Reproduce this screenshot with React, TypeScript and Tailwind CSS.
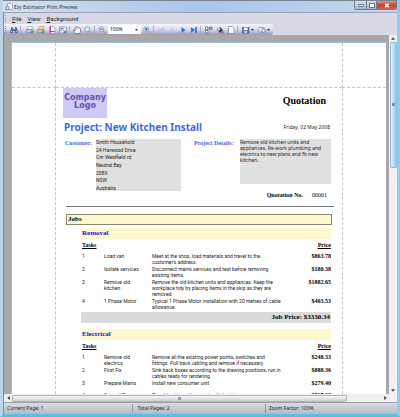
import type { ReactNode } from "react";

type Task = { name: string[]; description: string[]; price: string };

const customer = [
  "Smith Household",
  "24 Harwood Drive",
  "Cnr Westfield rd",
  "Neutral Bay",
  "2089",
  "NSW",
  "Australia",
];

const removalTasks: Task[] = [
  {
    name: ["Load van"],
    description: ["Meet at the shop, load materials and travel to the", "customer's address."],
    price: "$863.78",
  },
  {
    name: ["Isolate services"],
    description: ["Disconnect mains services and test before removing", "existing items."],
    price: "$180.38",
  },
  {
    name: ["Remove old", "kitchen"],
    description: [
      "Remove the old kitchen units and appliances. Keep the",
      "workplace tidy by placing items in the skip as they are",
      "removed.",
    ],
    price: "$1882.65",
  },
  {
    name: ["1 Phase Motor"],
    description: ["Typical 1 Phase Motor installation with 20 metres of cable", "allowance."],
    price: "$403.53",
  },
];

const electricalTasks: Task[] = [
  {
    name: ["Remove old", "electrics"],
    description: ["Remove all the existing power points, switches and", "fittings. Pull back cabling and remove if necessary."],
    price: "$248.33",
  },
  {
    name: ["First Fix"],
    description: ["Sink back boxes according to the drawing positions, run in", "cables ready for rendering."],
    price: "$888.36",
  },
  {
    name: ["Prepare Mains"],
    description: ["Install new consumer unit"],
    price: "$279.40",
  },
  {
    name: ["Second Fix"],
    description: ["Travel to site and terminate all electrics"],
    price: "$867.62",
  },
];

function Lines({ lines }: { lines: string[] }) {
  return (
    <>
      {lines.map((line) => (
        <span key={line} className="block whitespace-nowrap">
          {line}
        </span>
      ))}
    </>
  );
}

function Icon({ children }: { children: ReactNode }) {
  return (
    <svg viewBox="0 0 16 16" className="h-2 w-2 shrink-0" fill="none" aria-hidden="true">
      {children}
    </svg>
  );
}

function ToolButton({ label, children }: { label: string; children: ReactNode }) {
  return (
    <button type="button" aria-label={label} className="flex w-[11px] shrink-0 items-center justify-center">
      <Icon>{children}</Icon>
    </button>
  );
}

function Separator() {
  return <span className="mx-px h-[7px] w-px shrink-0 bg-[#a9a7c0]" />;
}

function Caret() {
  return (
    <svg viewBox="0 0 6 4" className="h-[2px] w-[3px] shrink-0" aria-hidden="true">
      <path d="M0 0h6L3 4z" fill="#333" />
    </svg>
  );
}

function Lens({ sign }: { sign?: string }) {
  return (
    <>
      <path d="M10.5 10.5L15 15" stroke="#c39a55" strokeWidth="2.6" />
      <circle cx="6.5" cy="6.5" r="5" fill="#d9eafa" stroke="#7897bd" strokeWidth="1.6" />
      {sign && <path d={sign} stroke="#2c426c" strokeWidth="1.8" />}
    </>
  );
}

function TitleBar() {
  return (
    <header className="flex h-3 items-center border-t border-[#77838f] bg-linear-to-r from-[#d5e0ee] via-[#a9c4ea] to-[#c3d8ee] pl-[2px]">
      <svg viewBox="0 0 16 16" className="h-2 w-2" fill="none" aria-hidden="true">
        <path d="M5 1h7l3 3v9H5z" fill="#fafcff" stroke="#6685a8" strokeWidth="1.3" />
        <circle cx="5" cy="10" r="3.5" fill="#cfe3f7" stroke="#4773a3" strokeWidth="1.5" />
        <path d="M3 12l-3 3" stroke="#a87843" strokeWidth="2" />
      </svg>
      <h1 className="ml-px font-['Open_Sans',sans-serif] text-[5px] leading-[8px] whitespace-nowrap text-[#1b2430]">
        Ezy Estimator Print Preview
      </h1>
      <div className="ml-auto flex h-[9px] self-start overflow-hidden rounded-b-[2px] border border-t-0 border-[#6e7d92]">
        <button type="button" aria-label="Minimize" className="flex w-3 items-center justify-center border-r border-[#6e7d92] bg-linear-to-b from-[#d5dfeb] to-[#a7b9d0]">
          <span className="h-[3px] w-[6px] rounded-[1px] border border-[#66758a] bg-white" />
        </button>
        <button type="button" aria-label="Maximize" className="flex w-[10px] items-center justify-center border-r border-[#6e7d92] bg-linear-to-b from-[#d5dfeb] to-[#a7b9d0]">
          <span className="h-[5px] w-[6px] border border-[#66758a] bg-white" />
        </button>
        <button type="button" aria-label="Close" className="flex w-[19px] items-center justify-center bg-linear-to-b from-[#dd9285] via-[#c9402c] to-[#d2614a]">
          <svg viewBox="0 0 10 8" className="h-[5px] w-[6px]" fill="none" aria-hidden="true">
            <path d="M2 1l6 6M8 1L2 7" stroke="#fff" strokeWidth="2.2" />
          </svg>
        </button>
      </div>
    </header>
  );
}

function MenuBar() {
  return (
    <nav className="flex h-3 items-center gap-[6px] border-t border-[#9aa6b8] pl-px font-[Roboto,sans-serif] text-[6px] leading-[8px] text-[#1d1d28]">
      <span className="h-[7px] border-l border-dotted border-[#8886a0]" />
      <button type="button"><u>F</u>ile</button>
      <button type="button"><u>V</u>iew</button>
      <button type="button"><u>B</u>ackground</button>
    </nav>
  );
}

function Toolbar() {
  return (
    <div className="flex h-[11px] w-[269px] items-center rounded-r-[2px] bg-linear-to-b from-[#f6f5fb] via-[#dddbea] to-[#9896b6] pl-px">
      <span className="h-[7px] border-l border-dotted border-[#77759a]" />
      <span className="w-[2px]" />
      <ToolButton label="Find">
        <path d="M3 2h3v4h4V2h3l3 9v3h-6v-4H6v4H0v-3z" fill="#4a6ca8" />
        <path d="M2 11h2m8 0h2" stroke="#bcd2f0" strokeWidth="2" />
      </ToolButton>
      <Separator />
      <span className="w-[2px]" />
      <ToolButton label="Print">
        <path d="M5 1h8l-2 6H3z" fill="#fff" stroke="#7d8ea8" />
        <path d="M1 7h13v6H1z" fill="#c3cbd9" stroke="#5d6e8d" />
        <circle cx="12" cy="12" r="3" fill="#46a83e" />
      </ToolButton>
      <ToolButton label="Quick print">
        <path d="M5 1h9l-2 6H3z" fill="#ffd983" stroke="#b08643" />
        <path d="M1 7h13v6H1z" fill="#cbc8cb" stroke="#6f6b77" />
        <circle cx="12" cy="12" r="3" fill="#46a83e" />
      </ToolButton>
      <ToolButton label="Page setup">
        <path d="M3 1h8l3 3v11H3z" fill="#fff" stroke="#8a8ba5" strokeWidth="1.4" />
        <path d="M5 1v14M3 11h10" stroke="#c0389b" strokeWidth="2" />
      </ToolButton>
      <ToolButton label="Scale">
        <path d="M1 2h14v12H1z" fill="#eef3fb" stroke="#6b83a8" strokeWidth="1.4" />
        <path d="M4 11V5h5M7 7l6 6M13 9v4H9" stroke="#46618d" strokeWidth="1.6" />
      </ToolButton>
      <Separator />
      <ToolButton label="Hand tool">
        <path d="M4 15L1 9l2-1 1 2V4l2-1V2l2-1 2 1 2 1 1 2 2 1v5l-2 4z" fill="#fff" stroke="#5b5b6b" strokeWidth="1.4" />
        <path d="M7 3v4M10 3v4" stroke="#8b8b99" />
      </ToolButton>
      <ToolButton label="Magnifier">
        <Lens />
      </ToolButton>
      <Separator />
      <ToolButton label="Zoom out">
        <Lens sign="M4 6.5h5" />
      </ToolButton>
      <select
        aria-label="Zoom"
        defaultValue="100%"
        className="ml-px h-[9px] w-[27px] appearance-none bg-white pl-[2px] text-[5px] leading-[9px] text-black"
      >
        <option>100%</option>
        <option>200%</option>
      </select>
      <span className="flex h-[9px] w-[6px] items-center bg-white opacity-90">
        <Caret />
      </span>
      <ToolButton label="Zoom in">
        <Lens sign="M4 6.5h5M6.5 4v5" />
      </ToolButton>
      <Separator />
      <ToolButton label="First page">
        <path d="M4 3v10M13 3L6 8l7 5z" fill="#b2c8ee" stroke="#b2c8ee" strokeWidth="2" />
      </ToolButton>
      <ToolButton label="Previous page">
        <path d="M11 3L4 8l7 5z" fill="#b2c8ee" />
      </ToolButton>
      <ToolButton label="Next page">
        <path d="M5 2l8 6-8 6z" fill="#2873e0" />
      </ToolButton>
      <ToolButton label="Last page">
        <path d="M2 2l8 6-8 6z" fill="#2873e0" />
        <path d="M12 2v12" stroke="#2460bd" strokeWidth="3" />
      </ToolButton>
      <Separator />
      <span className="w-px" />
      <ToolButton label="Multiple pages">
        <path d="M1 2h5v5H1zM9 2h5v5H9zM1 9h5v5H1z" fill="#fff" stroke="#4d6486" strokeWidth="1.6" />
        <path d="M8 4h6" stroke="#4d6486" strokeWidth="1.6" />
      </ToolButton>
      <ToolButton label="Background color">
        <path d="M2 7l6-5 6 6-6 6z" fill="#343e69" />
        <path d="M2 7l4-4 3 3-4 4z" fill="#fff" stroke="#343e69" />
        <path d="M11 9l4 2v4h-4z" fill="#b34c55" />
      </ToolButton>
      <ToolButton label="Watermark">
        <path d="M3 1h7l4 4v10H3z" fill="#fff" stroke="#647d9d" strokeWidth="1.4" />
      </ToolButton>
      <Separator />
      <span className="w-px" />
      <ToolButton label="Export">
        <path d="M1 3h13v11H1z" fill="#6c7ebb" stroke="#3e4e8a" strokeWidth="1.4" />
        <path d="M4 3h7v5H4z" fill="#fff" />
        <path d="M5 10h5v4H5z" fill="#c6d2ee" />
      </ToolButton>
      <Caret />
      <span className="w-[2px]" />
      <ToolButton label="Send by e-mail">
        <path d="M2 3h9v9H2z" fill="#fff" stroke="#7387a6" strokeWidth="1.4" />
        <circle cx="11" cy="9" r="4" fill="#d2e3f5" stroke="#5c7ba6" strokeWidth="1.6" />
      </ToolButton>
      <Caret />
    </div>
  );
}

function TaskTable({ tasks }: { tasks: Task[] }) {
  return (
    <table className="w-full table-fixed border-collapse text-left align-top font-[Roboto,sans-serif] text-[5px] leading-[6px] text-[#222]">
      <colgroup>
        <col className="w-[22px]" />
        <col className="w-[48px]" />
        <col />
        <col className="w-[30px]" />
      </colgroup>
      <thead className="font-['Liberation_Serif',serif] text-[6px] leading-[10px] text-black underline">
        <tr>
          <th colSpan={3} className="pb-[3px] pl-px">Tasks</th>
          <th className="pb-[3px] text-right">Price</th>
        </tr>
      </thead>
      <tbody>
        {tasks.map((task, i) => (
          <tr key={task.price} className="h-3 align-top">
            <td className="pb-px pl-px">{i + 1}</td>
            <td className="pb-px pl-px"><Lines lines={task.name} /></td>
            <td className="pb-px pl-px"><Lines lines={task.description} /></td>
            <td className="pb-px text-right font-['Liberation_Serif',serif] text-[6px] font-bold text-black">
              {task.price}
            </td>
          </tr>
        ))}
      </tbody>
    </table>
  );
}

function Job({ title, tasks, total }: { title: string; tasks: Task[]; total?: string }) {
  return (
    <section className="ml-[15px] mr-px">
      <h3 className="mb-px h-[11px] bg-[#fff7cd] pl-px font-['Liberation_Serif',serif] text-[7px] leading-[11px] font-bold text-[#1410e6]">
        {title}
      </h3>
      <TaskTable tasks={tasks} />
      {total && (
        <p className="mt-px mb-[6px] h-[11px] bg-[#dadada] pr-px text-right font-['Liberation_Serif',serif] text-[7px] leading-[11px] font-bold text-black">
          Job Price: {total}
        </p>
      )}
    </section>
  );
}

function Quotation() {
  return (
    <article className="pr-2 pl-[7px]">
      <div className="flex items-start justify-between">
        <div className="flex h-[30px] w-11 flex-col items-center bg-[#cfcaf5] pt-[6px] font-['DejaVu_Sans',sans-serif] text-[8px] leading-[8px] font-bold text-[#6650b0]">
          <span>Company</span>
          <span>Logo</span>
        </div>
        <h2 className="mt-[6px] mr-2 font-['Liberation_Serif',serif] text-[10px] leading-[14px] font-bold text-black">
          Quotation
        </h2>
      </div>
      <div className="mt-[2px] flex items-center justify-between pl-px">
        <h2 className="text-[10px] leading-[14px] font-bold whitespace-nowrap text-[#3f68e2]">
          Project: New Kitchen Install
        </h2>
        <p className="pr-1 text-[5px] leading-[8px] whitespace-nowrap text-[#222]">Friday, 02 May 2008</p>
      </div>
      <div className="mt-[5px] flex items-start pl-[2px] text-[5px] leading-[6px] text-[#222]">
        <h4 className="w-[31px] shrink-0 font-['Liberation_Serif',serif] text-[6px] leading-[8px] font-bold text-[#3f68e2]">
          Customer:
        </h4>
        <address className="flex h-[52px] w-[85px] flex-col justify-between bg-[#e0e0e0] font-[Roboto,sans-serif] not-italic">
          <Lines lines={customer} />
        </address>
        <h4 className="ml-auto w-[46px] shrink-0 font-['Liberation_Serif',serif] text-[6px] leading-[8px] font-bold text-[#3f68e2]">
          Project Details:
        </h4>
        <div className="mr-[3px] w-[91px] shrink-0">
          <p className="h-[45px] bg-[#e0e0e0]">
            <Lines
              lines={[
                "Remove old kitchen units and",
                "appliances. Re-work plumbing and",
                "electrics to new plans and fit new",
                "kitchen.",
              ]}
            />
          </p>
        </div>
      </div>
      <p className="flex justify-end gap-[9px] pr-[7px] font-['Liberation_Serif',serif] text-[6px] leading-[8px] text-black">
        <b>Quotation No.</b>
        <span>00001</span>
      </p>
      <hr className="mt-[7px] ml-[3px] border-[#777]" />
      <div className="mt-[7px] ml-[3px]">
        <h3 className="mr-[2px] mb-[3px] h-[11px] border border-[#8a866f] bg-[#fff7cd] pl-px font-['Liberation_Serif',serif] text-[7px] leading-[9px] font-bold text-black">
          Jobs
        </h3>
        <div className="mr-[2px]">
          <Job title="Removal" tasks={removalTasks} total="$3330.34" />
          <Job title="Electrical" tasks={electricalTasks} />
        </div>
      </div>
    </article>
  );
}

function VerticalScrollbar() {
  return (
    <div className="flex w-2 shrink-0 flex-col items-center bg-[#f0f0f2]">
      <button type="button" aria-label="Scroll up" className="flex h-[7px] w-full items-center justify-center">
        <svg viewBox="0 0 6 4" className="h-[3px] w-1" aria-hidden="true"><path d="M0 4h6L3 0z" fill="#34405c" /></svg>
      </button>
      <div className="flex h-[35%] w-[7px] items-center justify-center rounded-[1px] border border-[#8fbcd8] bg-linear-to-r from-[#e2f5fd] to-[#8fcbee]">
        <span className="h-[3px] w-[3px] bg-[#6a95b0]" />
      </div>
      <button type="button" aria-label="Scroll down" className="mt-auto flex h-[7px] w-full items-center justify-center">
        <svg viewBox="0 0 6 4" className="h-[3px] w-1" aria-hidden="true"><path d="M0 0h6L3 4z" fill="#34405c" /></svg>
      </button>
    </div>
  );
}

function HorizontalScrollbar() {
  return (
    <div className="flex h-2 shrink-0 items-center bg-[#f0f0f2] pr-2">
      <button type="button" aria-label="Scroll left" className="flex w-2 justify-center">
        <svg viewBox="0 0 4 6" className="h-1 w-[3px]" aria-hidden="true"><path d="M4 0v6L0 3z" fill="#34405c" /></svg>
      </button>
      <div className="flex h-[7px] w-[87%] items-center justify-center rounded-[1px] border border-[#b4b4b8] bg-linear-to-b from-[#f7f7f7] to-[#cfcfd3]">
        <span className="h-[3px] w-[3px] bg-[#9a9a9e]" />
      </div>
      <button type="button" aria-label="Scroll right" className="ml-auto flex w-2 justify-center">
        <svg viewBox="0 0 4 6" className="h-1 w-[3px]" aria-hidden="true"><path d="M0 0v6l4-3z" fill="#34405c" /></svg>
      </button>
    </div>
  );
}

function StatusBar() {
  return (
    <footer className="grid h-3 shrink-0 grid-cols-[33fr_34fr_34fr] items-center border-t border-[#9a9fa6] bg-linear-to-b from-[#d9dde2] to-[#b4bac2] text-[5px] leading-[9px] text-[#20242c]">
      <span className="pl-[3px]">Current Page: 1</span>
      <span className="border-l border-[#949aa4] pl-1">Total Pages: 2</span>
      <span className="border-l border-[#949aa4] pl-[3px]">Zoom Factor: 100%</span>
    </footer>
  );
}

export default function App() {
  return (
    <div className="flex h-screen flex-col overflow-hidden border-x-3 border-b-3 border-r-[#8dcdf0] border-b-[#56bfe6] border-l-[#bdd3ea] bg-[#d8d7e5] font-['Noto_Sans',sans-serif]">
      <TitleBar />
      <div className="flex min-h-0 flex-1 flex-col border-l border-[#858b95]">
        <MenuBar />
        <Toolbar />
        <main className="flex min-h-0 flex-1 bg-[#a8a8a8]">
          <div className="min-w-0 flex-1 overflow-hidden pt-[7px] pr-[3px] pl-[7px]">
            <div className="grid h-full grid-cols-[44px_1fr_44px] grid-rows-[45px_1fr] border-t border-l border-[#9fc0da] bg-white">
              <div className="border-r border-b border-dashed border-[#c4c4c4]" />
              <div className="border-b border-dashed border-[#c4c4c4]" />
              <div className="border-b border-l border-dashed border-[#c4c4c4]" />
              <div className="border-r border-dashed border-[#c4c4c4]" />
              <div className="min-h-0 overflow-hidden">
                <Quotation />
              </div>
              <div className="border-l border-dashed border-[#c4c4c4]" />
            </div>
          </div>
          <VerticalScrollbar />
        </main>
        <HorizontalScrollbar />
        <StatusBar />
      </div>
    </div>
  );
}
